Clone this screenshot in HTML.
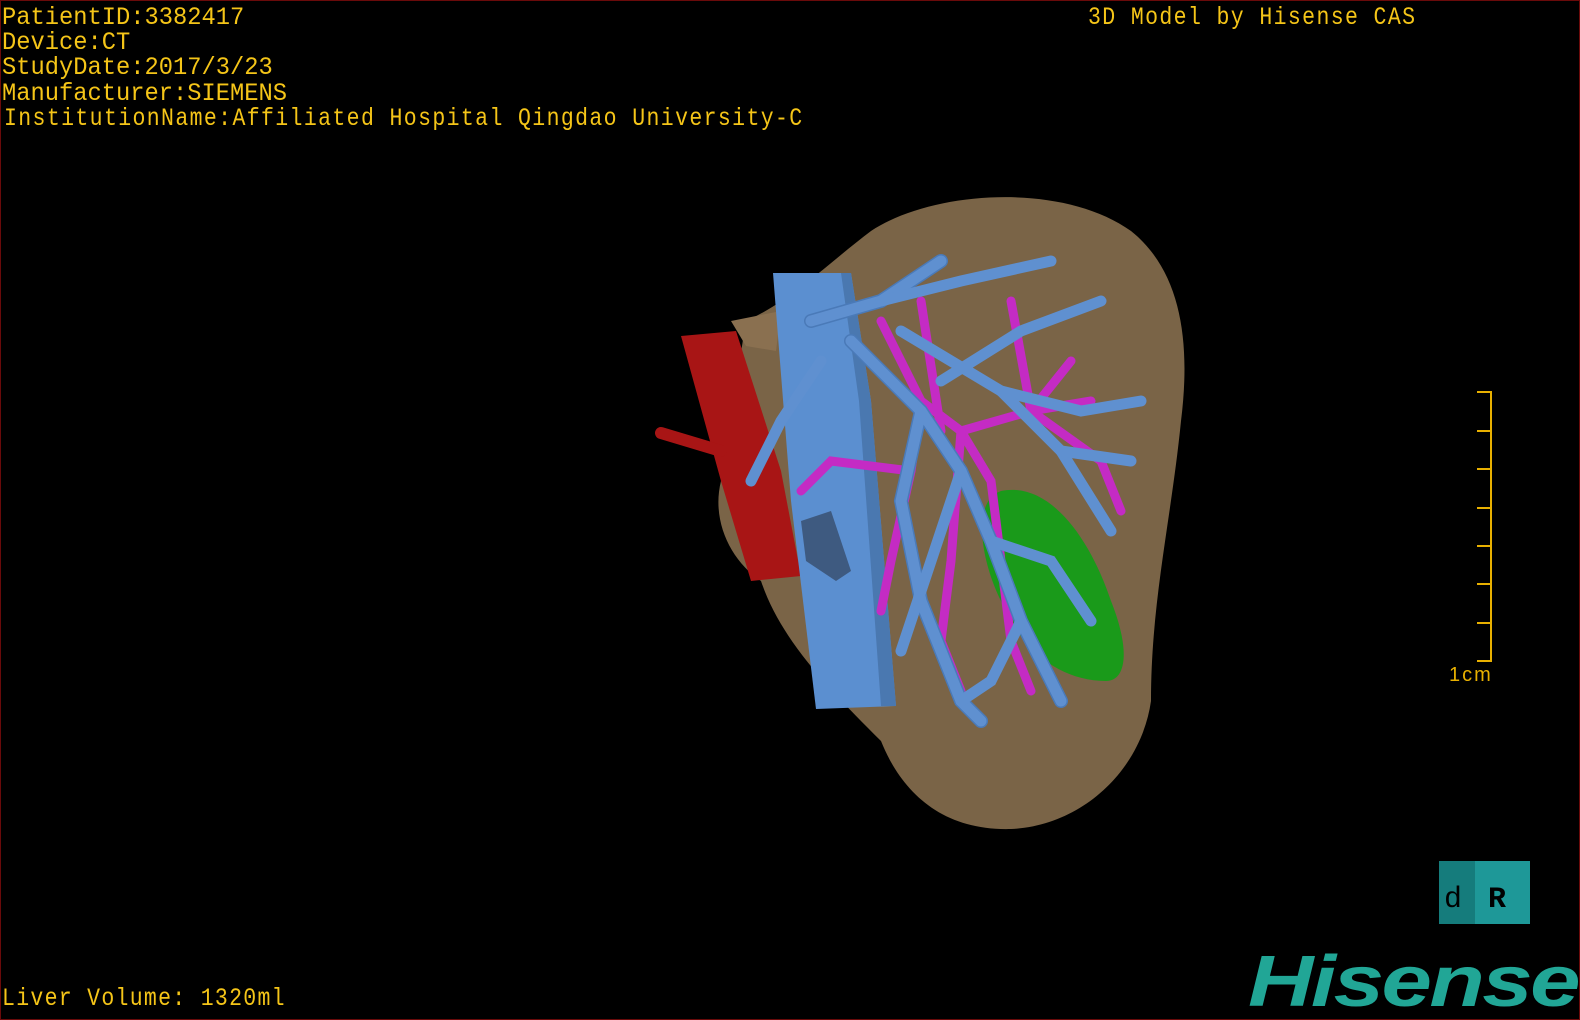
<!DOCTYPE html>
<html><head><meta charset="utf-8"><style>
html,body{margin:0;padding:0;background:#000;}
#c{position:relative;width:1580px;height:1020px;background:#000;overflow:hidden;box-sizing:border-box;border:1px solid #6a0a0a;}
.t{position:absolute;color:#f5c518;font-family:"Liberation Mono",monospace;font-size:25px;line-height:25px;white-space:nowrap;transform-origin:0 0;transform:scaleX(0.95);}
</style></head><body><div id="c">
<div class="t" style="left:1px;top:4px">PatientID:3382417</div>
<div class="t" style="left:1px;top:29px">Device:CT</div>
<div class="t" style="left:1px;top:54px">StudyDate:2017/3/23</div>
<div class="t" style="left:1px;top:80px">Manufacturer:SIEMENS</div>
<div class="t" style="left:3px;top:105px;transform:scaleX(0.86);letter-spacing:1.6px">InstitutionName:Affiliated Hospital Qingdao University-C</div>
<div class="t" style="left:1087px;top:4px;transform:scaleX(0.86);letter-spacing:1.6px">3D Model by Hisense CAS</div>
<div class="t" style="left:1px;top:985px;transform:scaleX(0.86);letter-spacing:1.5px">Liver Volume: 1320ml</div>
<svg width="1580" height="1020" style="position:absolute;left:0;top:0">
<path d="M870 230 C930 190 1060 180 1130 230 C1180 270 1190 340 1180 420 C1170 520 1150 600 1150 700 C1140 770 1080 825 1010 828 C940 830 900 790 880 740 C830 690 780 640 760 580 C730 560 710 520 720 480 C730 420 740 350 745 320 C790 300 830 260 870 230Z" fill="#7a6447"/>
<path d="M730 320 L780 310 L775 350 L745 345Z" fill="#8a7050"/>
<path d="M1000 490 C1050 480 1090 540 1110 600 C1130 650 1125 680 1105 680 C1060 680 1020 650 1000 600 C980 560 970 500 1000 490Z" fill="#1a9a1a"/>
<path d="M680 335 L735 330 L780 470 L800 575 L750 580 L720 480 Z" fill="#a81515"/>
<path d="M660 432 L720 450" stroke="#a81515" stroke-width="12" stroke-linecap="round"/>
<path d="M772 272 L850 272 L870 400 L895 705 L815 708 L790 500 Z" fill="#5b8fd0"/>
<path d="M850 272 L870 400 L895 705 L880 705 L858 400 L840 272Z" fill="#4a78b0"/>
<g stroke="#c42bc4" stroke-width="9" fill="none" stroke-linecap="round">
<path d="M880 320 L920 400 L960 430 L1030 410 L1070 360"/><path d="M920 400 L910 470 L890 560 L880 610"/>
<path d="M960 430 L990 480 L1000 560 L1010 640 L1030 690"/><path d="M1030 410 L1100 460 L1120 510"/>
<path d="M920 300 L940 430"/><path d="M1010 300 L1030 410 L1090 400"/><path d="M910 470 L830 460 L800 490"/>
<path d="M960 430 L950 560 L940 640 L960 690"/></g>
<g stroke="#4a7ab8" stroke-width="14" fill="none" stroke-linecap="round">
<path d="M810 320 L880 300 L940 260"/><path d="M850 340 L920 410 L960 470 L990 540 L1020 620 L1060 700"/>
<path d="M920 410 L900 500 L920 600 L960 700 L980 720"/></g>
<g stroke="#5f90d0" stroke-width="11" fill="none" stroke-linecap="round">
<path d="M810 320 L880 300 L940 260"/><path d="M850 340 L920 410 L960 470 L990 540 L1020 620 L1060 700"/>
<path d="M880 300 L960 280 L1050 260"/><path d="M900 330 L1000 390 L1080 410 L1140 400"/>
<path d="M940 380 L1020 330 L1100 300"/><path d="M920 410 L900 500 L920 600 L960 700 L980 720"/>
<path d="M1000 390 L1060 450 L1110 530"/><path d="M820 360 L780 420 L750 480"/>
<path d="M960 470 L930 560 L900 650"/><path d="M1020 620 L990 680 L960 700"/>
<path d="M1060 450 L1130 460"/><path d="M990 540 L1050 560 L1090 620"/></g>
<path d="M800 520 L830 510 L850 570 L835 580 L805 560Z" fill="#3e5a80"/>
<g stroke="#e8b000" stroke-width="2" fill="none"><path d="M1476 391 H1490 V660 H1476"/><path d="M1476 430H1490M1476 468H1490M1476 507H1490M1476 545H1490M1476 583H1490M1476 622H1490"/></g>
<text x="1448" y="680" fill="#e8b000" font-family="Liberation Sans,sans-serif" font-size="20" letter-spacing="2">1cm</text>
<rect x="1438" y="860" width="36" height="63" fill="#157c7c"/><rect x="1474" y="860" width="55" height="63" fill="#1e9898"/>
<text x="1443" y="906" fill="#000" font-family="Liberation Mono,monospace" font-size="30">d</text>
<text x="1487" y="906" fill="#000" font-family="Liberation Mono,monospace" font-size="30" font-weight="bold">R</text>
<text x="1247" y="1005" fill="#21a696" font-family="Liberation Sans,sans-serif" font-weight="bold" font-style="italic" font-size="72" letter-spacing="-2" textLength="330" lengthAdjust="spacingAndGlyphs">Hisense</text>
</svg>
</div></body></html>
